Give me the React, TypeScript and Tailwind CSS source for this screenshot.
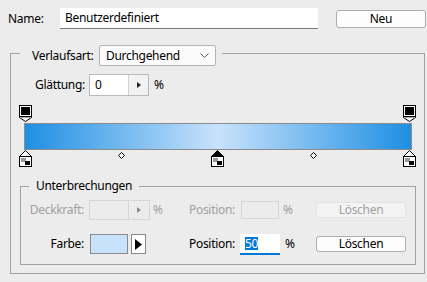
import React from 'react';

const TopStop = () => (
  <svg width="13" height="17" viewBox="0 0 13 17">
    <rect x="0.5" y="0.5" width="12" height="11" fill="#fff" stroke="#000" />
    <rect x="2" y="2" width="9" height="8" fill="#000" />
    <path d="M0.5 11.5 H12.5 V12.5 L6.5 16.5 L0.5 12.5 Z" fill="#fff" stroke="#000" />
    <rect x="1" y="12" width="11" height="1" fill="#a8a8a8" />
  </svg>
);

const BottomStop = ({ selected }: { selected?: boolean }) => (
  <svg width="13" height="17" viewBox="0 0 13 17">
    <path d="M6.5 0.5 L12.5 6.5 H0.5 Z" fill={selected ? '#000' : '#fff'} stroke="#000" />
    <rect x="0.5" y="6.5" width="12" height="10" fill="#fff" stroke="#000" />
    <rect x="2" y="8" width="9" height="7" fill="#fff" />
    <rect x="2" y="8" width="5" height="4" fill="#9a9a9a" />
    <rect x="6" y="11" width="5" height="4" fill="#000" />
  </svg>
);

const Diamond = () => (
  <svg width="7" height="7" viewBox="0 0 7 7">
    <path d="M3.5 0.5 L6.5 3.5 L3.5 6.5 L0.5 3.5 Z" fill="#fff" stroke="#000" />
  </svg>
);

const SmallArrow = ({ color }: { color: string }) => (
  <svg width="4" height="6" viewBox="0 0 4 6">
    <path d="M0 0 L4 3 L0 6 Z" fill={color} />
  </svg>
);

const App: React.FC = () => {
  return (
    <div className="w-[427px] h-[282px] bg-[#ececec] text-[12px] leading-[16px] tracking-[-0.3px] text-black font-['Noto_Sans',sans-serif] pt-[8px] overflow-hidden">
      {/* Name row */}
      <div className="flex items-center h-[21px] pl-[8px]">
        <span className="w-[52px]">Name:</span>
        <div className="w-[258px] h-[21px] bg-white border-b border-[#7a7a7a] flex items-center pl-[5px]">
          Benutzerdefiniert
        </div>
        <button className="ml-[18px] w-[90px] h-[18px] rounded-[3px] border border-[#adadad] bg-[#fdfdfd] flex items-center justify-center">
          Neu
        </button>
      </div>

      {/* Verlauf group */}
      <div className="relative mt-[24px] ml-[10px] w-[415px] h-[221px] border border-[#a3a3a3]">
        <div className="absolute left-[9px] top-[-9px] h-[21px] flex items-center pl-[12px] pr-[6px] bg-[#ececec]">
          <span className="w-[67px]">Verlaufsart:</span>
          <div className="w-[117px] h-[21px] border border-[#b3b3b3] rounded-[2px] bg-[#fbfbfb] flex items-center justify-between pl-[6px] pr-[6px]">
            <span>Durchgehend</span>
            <svg width="9" height="5" viewBox="0 0 9 5">
              <path d="M0.5 0.5 L4.5 4.5 L8.5 0.5" fill="none" stroke="#555" />
            </svg>
          </div>
        </div>

        {/* Glättung */}
        <div className="flex items-center h-[22px] mt-[20px] pl-[24px]">
          <span className="w-[54px]">Glättung:</span>
          <div className="w-[60px] h-[22px] border border-[#b9b9b9] bg-white flex">
            <span className="flex-1 flex items-center pl-[5px]">0</span>
            <span className="w-[20px] border-l border-[#d4d4d4] bg-[#f2f2f2] flex items-center justify-center">
              <SmallArrow color="#222" />
            </span>
          </div>
          <span className="ml-[5px]">%</span>
        </div>

        {/* Gradient editor */}
        <div className="relative mt-[9px] ml-[8px] w-[397px] h-[62px]">
          <div className="absolute left-0 top-0"><TopStop /></div>
          <div className="absolute left-[384px] top-0"><TopStop /></div>
          <div className="pt-[18px] pl-[5px]">
            <div className="w-[388px] h-[27px] border border-[#8c8c8c] bg-[linear-gradient(to_right,#1e8fe3_0%,#c8e2fb_50%,#1e8fe3_100%)]" />
          </div>
          <div className="absolute left-0 top-[45px]"><BottomStop /></div>
          <div className="absolute left-[192px] top-[45px]"><BottomStop selected /></div>
          <div className="absolute left-[384px] top-[45px]"><BottomStop /></div>
          <div className="absolute left-[99px] top-[47px]"><Diamond /></div>
          <div className="absolute left-[291px] top-[47px]"><Diamond /></div>
        </div>

        {/* Unterbrechungen group */}
        <div className="relative mt-[19px] ml-[9px] w-[396px] h-[79px] border border-[#a3a3a3]">
          <div className="absolute left-[8px] top-[-9px] h-[16px] px-[7px] bg-[#ececec] flex items-center">
            Unterbrechungen
          </div>

          <div className="flex items-center h-[20px] mt-[13px] text-[#a0a0a0]">
            <span className="w-[63px] text-right">Deckkraft:</span>
            <div className="ml-[5px] w-[61px] h-[20px] border border-[#d6d6d6] flex">
              <span className="flex-1" />
              <span className="w-[21px] border-l border-[#d6d6d6] flex items-center justify-center">
                <SmallArrow color="#8a8a8a" />
              </span>
            </div>
            <span className="ml-[3px] w-[36px]">%</span>
            <span className="w-[52px]">Position:</span>
            <div className="w-[38px] h-[18px] border border-[#d6d6d6]" />
            <span className="ml-[4px] w-[33px]">%</span>
            <button className="w-[90px] h-[16px] rounded-[3px] border border-[#e2e2e2] bg-[#f4f4f4] text-[#a0a0a0] flex items-center justify-center">
              Löschen
            </button>
          </div>

          <div className="flex items-center h-[20px] mt-[14px]">
            <span className="w-[63px] text-right">Farbe:</span>
            <div className="ml-[6px] w-[38px] h-[20px] border border-[#8a8a8a] bg-[#c8e2fb]" />
            <button className="ml-[3px] w-[15px] h-[20px] border border-[#8a8a8a] bg-white flex items-center justify-center">
              <svg width="7" height="11" viewBox="0 0 7 11">
                <path d="M0 0 L7 5.5 L0 11 Z" fill="#000" />
              </svg>
            </button>
            <span className="ml-[43px] w-[51px]">Position:</span>
            <div className="w-[40px] h-[21px] bg-white border-b-2 border-[#0078d7] flex items-center pl-[5px]">
              <span className="bg-[#0078d7] text-white leading-[13px]">50</span>
            </div>
            <span className="ml-[5px] w-[31px]">%</span>
            <button className="w-[90px] h-[16px] rounded-[3px] border border-[#adadad] bg-[#fdfdfd] flex items-center justify-center">
              Löschen
            </button>
          </div>
        </div>
      </div>
    </div>
  );
};

export default App;
